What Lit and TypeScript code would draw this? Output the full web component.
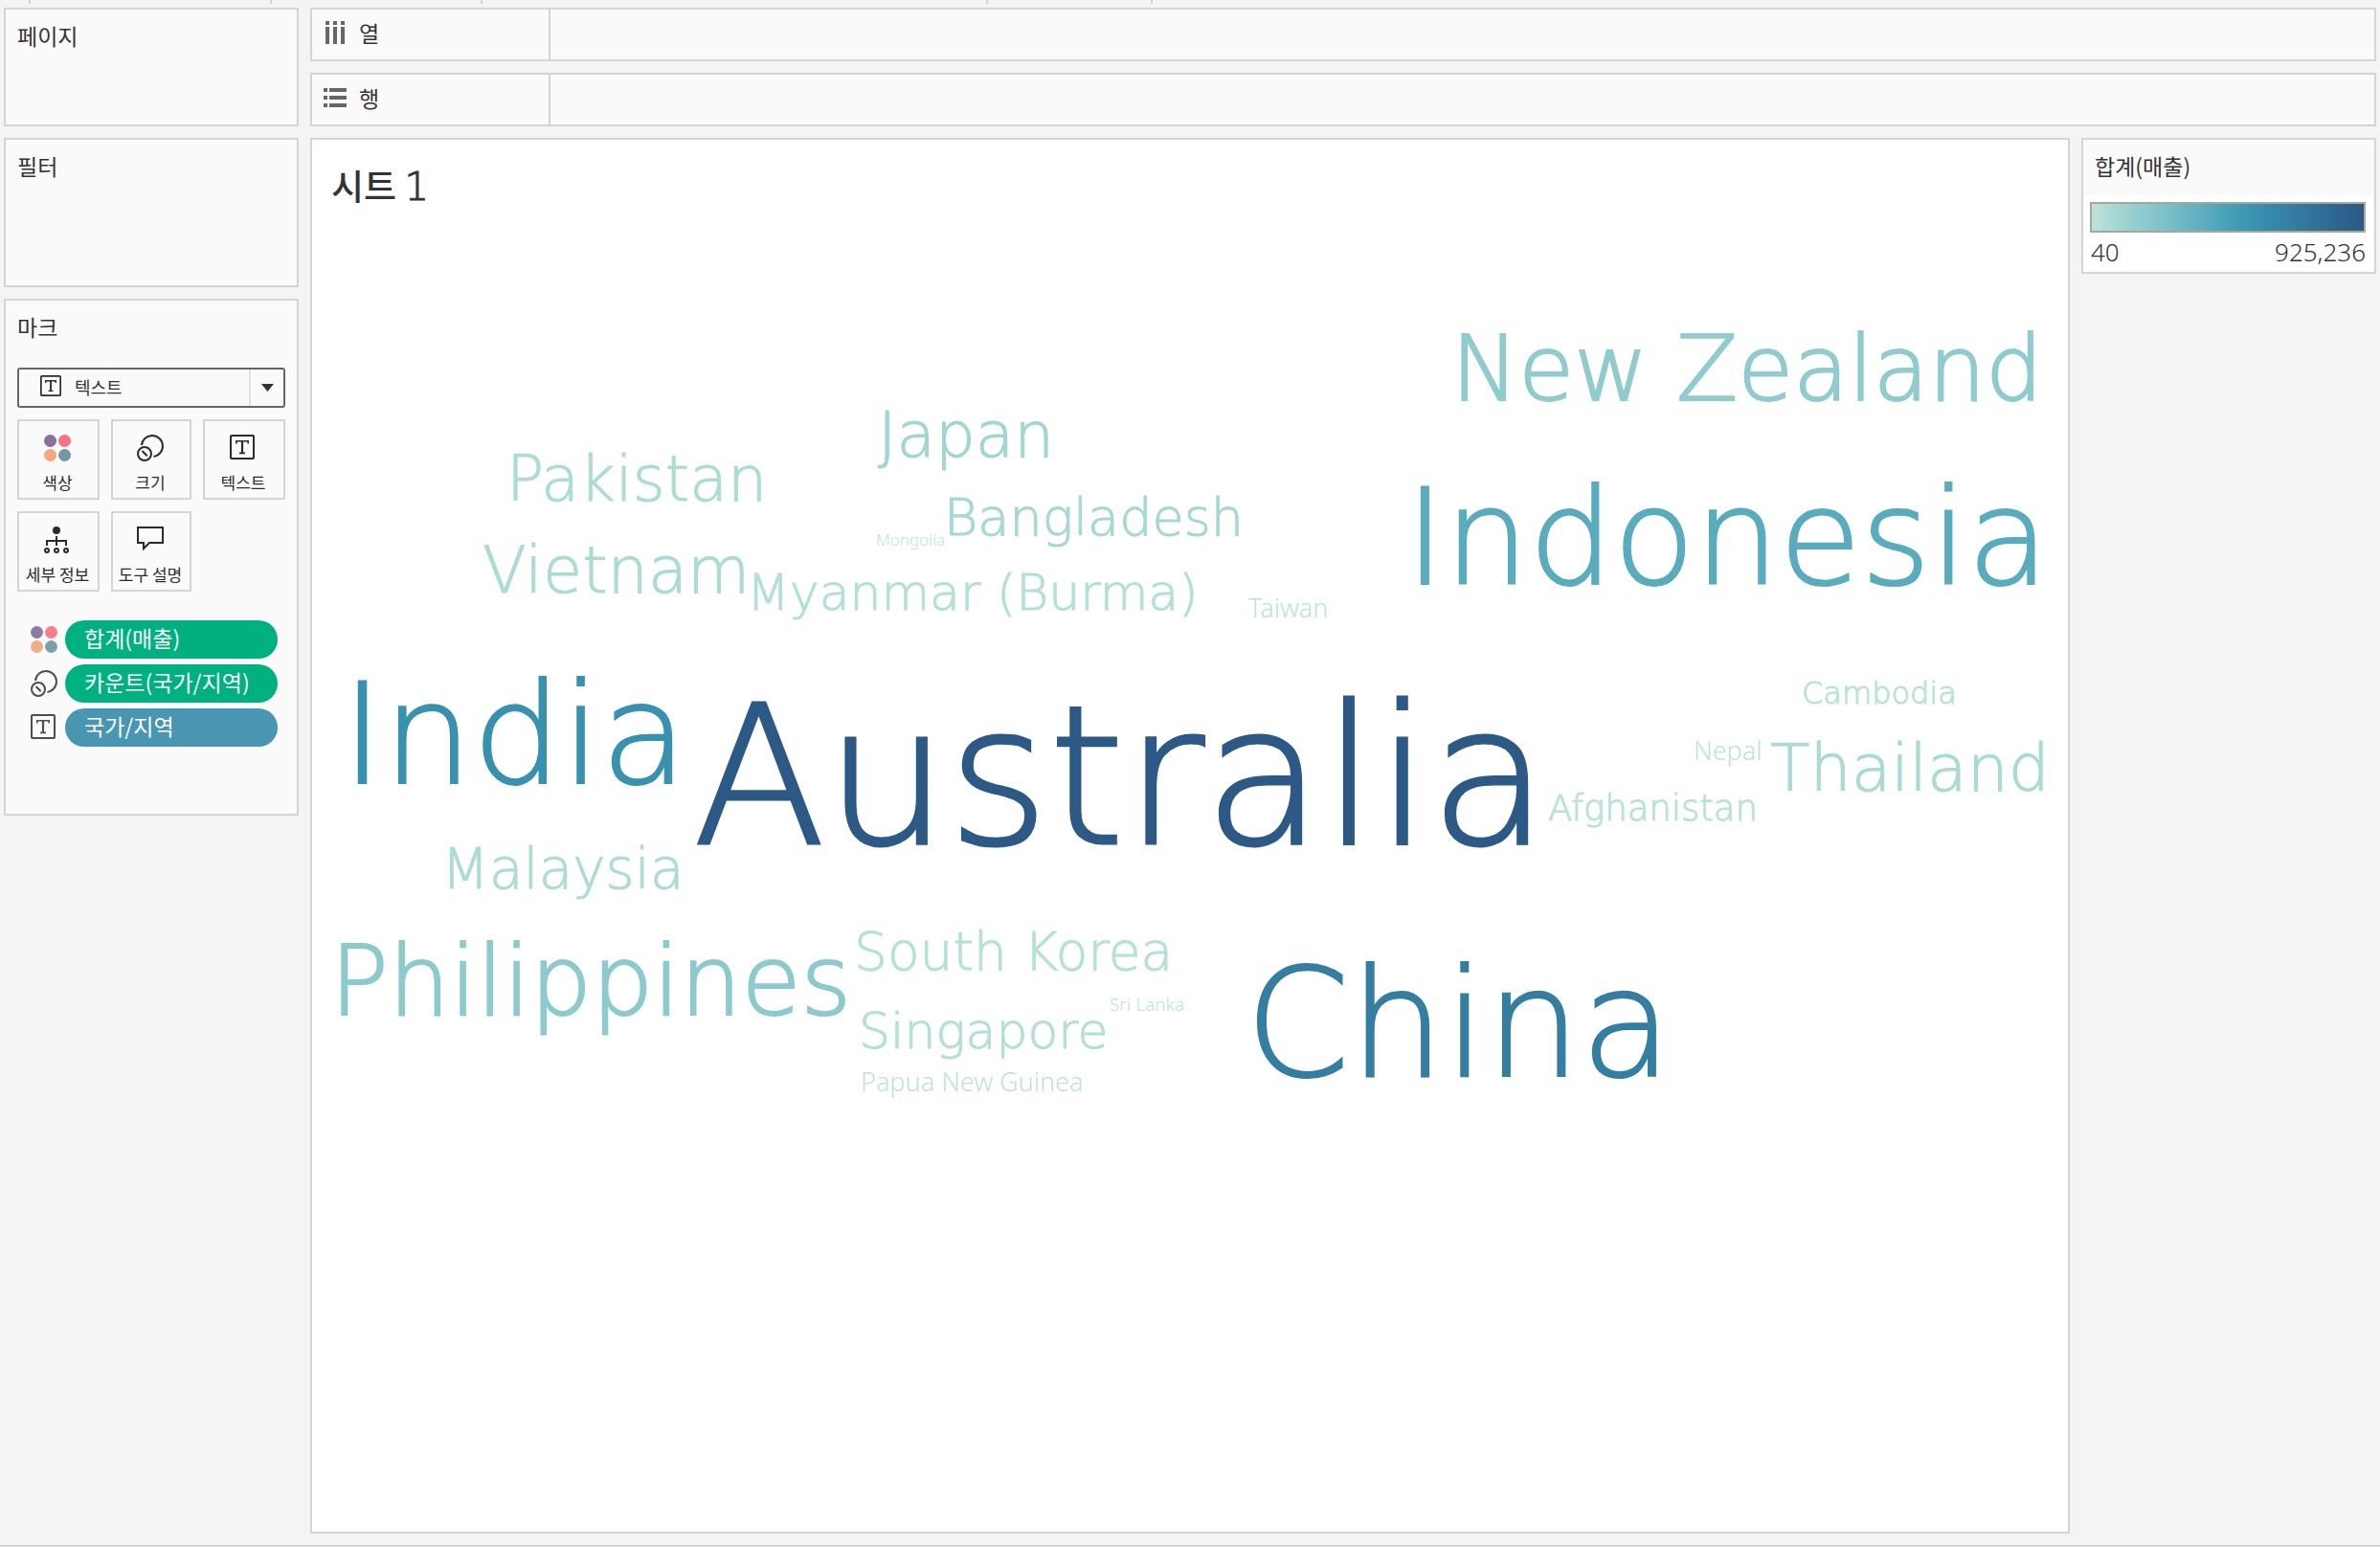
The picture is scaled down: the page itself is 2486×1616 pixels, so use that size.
import { LitElement, html, css, svg } from "lit";
import { customElement, property } from "lit/decorators.js";
import { classMap } from "lit/directives/class-map.js";
import { styleMap } from "lit/directives/style-map.js";

type IconName = "color" | "size" | "text" | "detail" | "tooltip" | "columns" | "rows";

interface Word {
  label: string;
  x: number;
  baseline: number;
  size: number;
  color: string;
}

/* Words below this size use a face that stays legible when small. */
const SMALL = 30;

/* Share of the font size between the top of a line-height: 1 box and its baseline. */
const ascent = (size: number) => (size < SMALL ? 0.888 : 0.846);

/* Extra stem weight by font size, so that the thin face keeps an even colour. */
const stroke = (size: number) => (size > 180 ? 3 : size > 90 ? 2 : size >= SMALL ? 1 : 0);

const WORDS: Word[] = [
  { label: "New Zealand", x: 1190, baseline: 199, size: 94, color: "#90cbce" },
  { label: "Japan", x: 591, baseline: 258, size: 66, color: "#a2d5d2" },
  { label: "Pakistan", x: 203, baseline: 303, size: 65, color: "#addcd5" },
  { label: "Bangladesh", x: 660, baseline: 340, size: 54, color: "#a6d8d4" },
  { label: "Mongolia", x: 589, baseline: 350, size: 17, color: "#bce4d8" },
  { label: "Indonesia", x: 1142, baseline: 391, size: 139, color: "#59acbe" },
  { label: "Vietnam", x: 178, baseline: 400, size: 67, color: "#abdbd5" },
  { label: "Myanmar (Burma)", x: 454, baseline: 417, size: 52, color: "#b3e0d7" },
  { label: "Taiwan", x: 978, baseline: 425, size: 27, color: "#bce4d8" },
  { label: "Cambodia", x: 1556, baseline: 515, size: 32, color: "#b9e3d8" },
  { label: "Nepal", x: 1443, baseline: 574, size: 27, color: "#bce4d8" },
  { label: "India", x: 31, baseline: 598, size: 147, color: "#3991b0" },
  { label: "Thailand", x: 1523, baseline: 607, size: 68, color: "#a9dad3" },
  { label: "Afghanistan", x: 1291, baseline: 637, size: 37, color: "#b9e3d8" },
  { label: "Australia", x: 398, baseline: 661, size: 202, color: "#2c5985" },
  { label: "Malaysia", x: 135, baseline: 708, size: 58, color: "#aedcd5" },
  { label: "South Korea", x: 566, baseline: 794, size: 55, color: "#b6e1d7" },
  { label: "Philippines", x: 19, baseline: 840, size: 101, color: "#8ccacd" },
  { label: "Sri Lanka", x: 833, baseline: 837, size: 19, color: "#bce4d8" },
  { label: "Singapore", x: 571, baseline: 875, size: 52, color: "#b3e0d7" },
  { label: "China", x: 975, baseline: 904, size: 156, color: "#347ea1" },
  { label: "Papua New Guinea", x: 573, baseline: 920, size: 27, color: "#bce4d8" },
];

const MARK_TYPES = ["텍스트", "자동", "막대", "라인", "영역", "사각형", "원", "모양", "맵"];

const CARDS: { icon: IconName; label: string }[] = [
  { icon: "color", label: "색상" },
  { icon: "size", label: "크기" },
  { icon: "text", label: "텍스트" },
  { icon: "detail", label: "세부 정보" },
  { icon: "tooltip", label: "도구 설명" },
];

const PILLS: { icon: IconName; label: string; kind: string }[] = [
  { icon: "color", label: "합계(매출)", kind: "measure" },
  { icon: "size", label: "카운트(국가/지역)", kind: "measure" },
  { icon: "text", label: "국가/지역", kind: "dimension" },
];

const ICONS = {
  color: svg`
    <circle cx="6.5" cy="6.5" r="6.5" fill="#86719a"/>
    <circle cx="21.5" cy="6.5" r="6.5" fill="#fa7282"/>
    <circle cx="6.5" cy="21.5" r="6.5" fill="#f3a77c"/>
    <circle cx="21.5" cy="21.5" r="6.5" fill="#7099a5"/>`,
  size: svg`
    <g fill="none" stroke="currentColor" stroke-width="2">
      <path d="M5 11A11 11 0 1 1 17.5 22.9"/>
      <circle cx="8" cy="20" r="7"/>
      <path d="M5.5 17L10.7 22.2"/>
    </g>`,
  text: svg`
    <g fill="none" stroke="currentColor" stroke-width="2">
      <rect x="1" y="1" width="24" height="24" rx="1"/>
      <path stroke-width="1.6" d="M6.8 9.4V6.8H19.2V9.4M10 19.4H16"/>
      <path stroke-width="2.2" d="M13 6.8V19.4"/>
    </g>`,
  detail: svg`
    <circle cx="13" cy="4" r="4" fill="currentColor"/>
    <g fill="none" stroke="currentColor" stroke-width="2">
      <path d="M13 10V20M3 20V15H23V20"/>
      <circle cx="3" cy="25" r="2"/>
      <circle cx="13" cy="25" r="2"/>
      <circle cx="23" cy="25" r="2"/>
    </g>`,
  tooltip: svg`
    <path fill="none" stroke="currentColor" stroke-width="2" d="M1 1H27V17H13L7 23V17H1Z"/>`,
  columns: svg`
    <path fill="currentColor" d="M2 0h4v4h-4zM10 0h4v4h-4zM18 0h4v4h-4zM2 6h4v18h-4zM10 6h4v18h-4zM18 6h4v18h-4z"/>`,
  rows: svg`
    <path fill="currentColor" d="M0 2h4v4h-4zM0 10h4v4h-4zM0 18h4v4h-4zM6 2h18v4h-18zM6 10h18v4h-18zM6 18h18v4h-18z"/>`,
};

@customElement("sheet-icon")
class SheetIcon extends LitElement {
  @property() name: IconName = "text";
  @property({ type: Number }) size = 28;
  @property({ type: Number }) box = 28;

  static styles = css`
    :host { display: block; flex: none; line-height: 0; }
    .glyph { display: block; overflow: visible; }
  `;

  render() {
    return html`<svg class="glyph" width=${this.size} height=${this.size}
      viewBox="0 0 ${this.box} ${this.box}" aria-hidden="true">${ICONS[this.name]}</svg>`;
  }
}

@customElement("marks-card")
class MarksCard extends LitElement {
  static styles = css`
    :host { display: block; }
    .type { display: grid; grid-template-columns: 1fr 38px; height: 42px; }
    .type select {
      grid-area: 1 / 1 / 2 / 3;
      appearance: none;
      box-sizing: border-box;
      width: 100%;
      height: 42px;
      margin: 0;
      padding: 0 40px 2px 58px;
      border: 2px solid #666;
      border-radius: 3px;
      background: #fafafa;
      color: #333;
      font: inherit;
      font-size: 18px;
    }
    .type-icon { grid-area: 1 / 1; align-self: center; margin: 0 0 4px 24px; pointer-events: none; color: #2b2b2b; }
    .arrow {
      grid-area: 1 / 2;
      display: flex;
      align-items: center;
      justify-content: center;
      margin: 2px 2px 2px 0;
      border-left: 2px solid #e2e2e2;
      pointer-events: none;
    }
    .arrow svg { display: block; }
    .cards { display: grid; grid-template-columns: 1fr 84px 1fr; gap: 12px; margin-top: 12px; }
    .card {
      display: flex;
      flex-direction: column;
      align-items: center;
      gap: 12px;
      height: 84px;
      margin: 0;
      padding: 14px 4px 6px 2px;
      border: 2px solid #d4d4d4;
      background: #fafafa;
      color: #2b2b2b;
      font: inherit;
      font-size: 17px;
      line-height: 20px;
      white-space: nowrap;
    }
    .pills { display: grid; gap: 6px; margin: 30px 0 0; padding: 0 8px 0 14px; list-style: none; }
    .row { display: flex; align-items: center; gap: 8px; color: #404040; }
    .row sheet-icon { opacity: 0.92; }
    .pill {
      flex: 1;
      height: 40px;
      margin: 0;
      padding: 0 20px 4px;
      border: 0;
      border-radius: 20px;
      color: #fff;
      font: inherit;
      font-size: 23px;
      line-height: 36px;
      text-align: left;
      white-space: nowrap;
    }
    .measure { background: #00b180; }
    .dimension { background: #4996b2; }
  `;

  render() {
    return html`
      <div class="type">
        <select aria-label="마크 유형">${MARK_TYPES.map((m) => html`<option>${m}</option>`)}</select>
        <sheet-icon class="type-icon" name="text" size="22" box="26"></sheet-icon>
        <span class="arrow"><svg width="13" height="8" viewBox="0 0 13 8"><path fill="#333" d="M0 0H13L6.5 8Z"/></svg></span>
      </div>
      <div class="cards">
        ${CARDS.map((c) => html`<button class="card" type="button">
          <sheet-icon name=${c.icon}></sheet-icon><span>${c.label}</span>
        </button>`)}
      </div>
      <ul class="pills">
        ${PILLS.map((p) => html`<li class="row">
          <sheet-icon name=${p.icon}></sheet-icon>
          <button class="pill ${p.kind}" type="button">${p.label}</button>
        </li>`)}
      </ul>`;
  }
}

@customElement("word-cloud")
class WordCloud extends LitElement {
  static styles = css`
    :host { display: block; position: relative; }
    .word {
      position: absolute;
      font-family: "DejaVu Sans", "Open Sans", sans-serif;
      font-weight: 200;
      line-height: 1;
      white-space: nowrap;
    }
    .small { font-family: "Noto Sans", "Open Sans", sans-serif; font-weight: 300; }
  `;

  render() {
    return WORDS.map((w) => html`<span class=${classMap({ word: true, small: w.size < SMALL })} style=${styleMap({
      left: `${w.x}px`,
      top: `${Math.round(w.baseline - w.size * ascent(w.size))}px`,
      fontSize: `${w.size}px`,
      color: w.color,
      "-webkit-text-stroke": `${stroke(w.size)}px ${w.color}`,
    })}>${w.label}</span>`);
  }
}

@customElement("app-root")
class AppRoot extends LitElement {
  static styles = css`
    :host {
      display: flex;
      flex-direction: column;
      box-sizing: border-box;
      min-height: 100vh;
      background: #f4f4f4;
      color: #333;
      font-family: "Noto Sans CJK KR", "Noto Sans", sans-serif;
      font-size: 23px;
    }
    * { box-sizing: border-box; }
    h1, h2, p { margin: 0; font-weight: 400; }
    .toolbar { display: flex; height: 4px; }
    .group { border-right: 2px solid #d4d4d4; }
    .group-s { width: 32px; }
    .group-m { width: 252px; }
    .group-n { width: 220px; }
    .group-l { width: 528px; }
    .group-k { width: 172px; }
    .main {
      flex: 1;
      display: grid;
      grid-template-columns: 308px minmax(0, 1fr);
      gap: 12px;
      padding: 4px 4px 12px;
    }
    .side, .view { display: flex; flex-direction: column; gap: 12px; }
    .panel { border: 2px solid #d4d4d4; background: #fafafa; padding: 0 12px; }
    .title { padding-bottom: 2px; font-size: 23px; line-height: 54px; }
    .pages { height: 124px; }
    .filters { height: 156px; }
    .marks { padding-bottom: 70px; }
    .marks .title { margin-bottom: 14px; }
    .shelf { display: flex; height: 56px; border: 2px solid #d4d4d4; background: #fafafa; }
    .shelf-name {
      display: flex;
      align-items: center;
      gap: 13px;
      width: 249px;
      padding: 0 12px 4px;
      border-right: 2px solid #d4d4d4;
    }
    .shelf-name sheet-icon { color: #666; }
    .work { flex: 1; display: grid; grid-template-columns: minmax(0, 1fr) 308px; gap: 12px; }
    .sheet { display: flex; flex-direction: column; border: 2px solid #d4d4d4; background: #fff; }
    .sheet-title { height: 74px; padding: 20px 20px 0; font-size: 37px; font-weight: 500; line-height: 54px; }
    .numeral { font-family: "DejaVu Sans", sans-serif; font-size: 40px; font-weight: 200; -webkit-text-stroke: 1px #333; }
    .cloud { flex: 1; }
    .legend { align-self: start; border: 2px solid #d4d4d4; background: #fff; }
    .legend .title { padding: 0 12px 4px; background: #fafafa; }
    .ramp {
      height: 32px;
      margin: 7px 9px 0 7px;
      border: 2px solid #a8a697;
      background: linear-gradient(90deg, #bce4d8, #aedcd5, #a1d5d2, #95cecf, #89c8cc, #7ec1ca, #72bac6,
        #66b2c2, #59acbe, #4ba5ba, #419eb6, #3b96b2, #358ead, #3586a7, #347ea1, #32779b, #316f96,
        #2f6790, #2d608a, #2c5985);
    }
    .range {
      display: flex;
      justify-content: space-between;
      padding: 0 9px 1px 8px;
      font-family: "Noto Sans", sans-serif;
      font-size: 26px;
      font-weight: 300;
      line-height: 40px;
    }
    .status { height: 2px; border-top: 1px solid #c8c8c8; background: #e2e2e2; }
  `;

  render() {
    return html`
      <div class="toolbar">
        <span class="group group-s"></span>
        <span class="group group-m"></span>
        <span class="group group-n"></span>
        <span class="group group-l"></span>
        <span class="group group-k"></span>
      </div>
      <main class="main">
        <aside class="side">
          <section class="panel pages"><h2 class="title">페이지</h2></section>
          <section class="panel filters"><h2 class="title">필터</h2></section>
          <section class="panel marks"><h2 class="title">마크</h2><marks-card></marks-card></section>
        </aside>
        <div class="view">
          <section class="shelf">
            <div class="shelf-name"><sheet-icon name="columns" size="24" box="24"></sheet-icon>열</div>
          </section>
          <section class="shelf">
            <div class="shelf-name"><sheet-icon name="rows" size="24" box="24"></sheet-icon>행</div>
          </section>
          <div class="work">
            <section class="sheet">
              <h1 class="sheet-title">시트 <span class="numeral">1</span></h1>
              <word-cloud class="cloud"></word-cloud>
            </section>
            <section class="legend">
              <h2 class="title">합계(매출)</h2>
              <div class="ramp"></div>
              <p class="range"><span>40</span><span>925,236</span></p>
            </section>
          </div>
        </div>
      </main>
      <footer class="status"></footer>`;
  }
}
